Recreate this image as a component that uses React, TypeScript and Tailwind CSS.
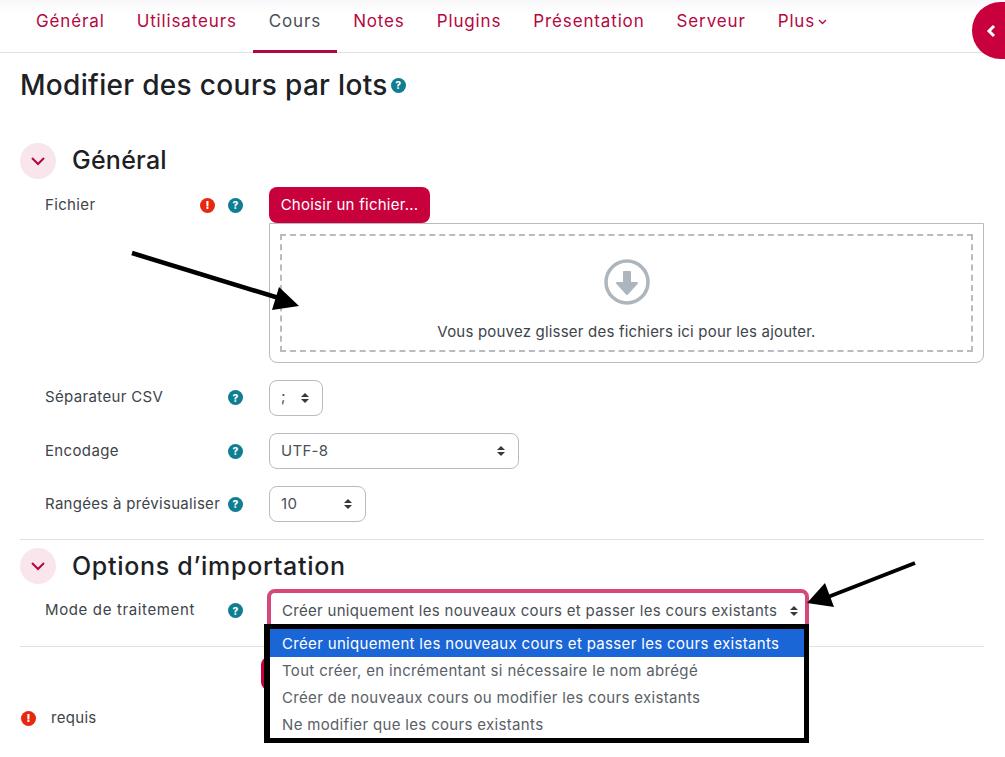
const FONT = "font-['Inter',sans-serif]";

function Help({ className = '' }: { className?: string }) {
  return (
    <span className={`w-[15px] h-[15px] rounded-full bg-[#0f7e92] text-white text-[10px] font-extrabold leading-none flex items-center justify-center shrink-0 ${className}`}>
      ?
    </span>
  );
}

function Required() {
  return (
    <span className="w-[15px] h-[15px] rounded-full bg-[#e6290f] text-white text-[11px] font-extrabold leading-none flex items-center justify-center shrink-0">
      !
    </span>
  );
}

function Sort() {
  return (
    <svg width="10" height="12" viewBox="0 0 10 12" className="shrink-0">
      <path d="M5 1 L9 5 H1 Z M5 11 L1 7 H9 Z" fill="#343a40" />
    </svg>
  );
}

function Chevron() {
  return (
    <div className="w-9 h-9 rounded-full bg-[#f8e6ec] flex items-center justify-center">
      <svg width="16" height="10" viewBox="0 0 16 10">
        <path d="M2 2 L8 8 L14 2" fill="none" stroke="#b5073f" strokeWidth="2" />
      </svg>
    </div>
  );
}

function SectionHead({ title, tracking }: { title: string; tracking: string }) {
  return (
    <div className="flex items-center gap-4 h-9">
      <Chevron />
      <h3 className={`text-[25px] font-medium text-[#1d2125] ${tracking}`}>{title}</h3>
    </div>
  );
}

function Row({ label, children, required, h, tracking = 'tracking-[0.35px]' }: { label: string; children: React.ReactNode; required?: boolean; h: string; tracking?: string }) {
  return (
    <div className={`flex items-center pl-[25px] ${h}`}>
      <div className="w-[224px] flex items-center shrink-0">
        <span className={`w-[155px] whitespace-nowrap text-[15px] text-[#3e4449] ${tracking}`}>{label}</span>
        <span className="w-[15px] mr-[13px]">{required && <Required />}</span>
        <Help />
      </div>
      {children}
    </div>
  );
}

function Select({ value, w }: { value: string; w: string }) {
  return (
    <div className={`${w} h-[36px] pl-[11px] pr-3 rounded-lg border border-[#b8bcc0] flex items-center justify-between text-[15px] tracking-[0.3px] text-[#4a5056]`}>
      <span>{value}</span>
      <Sort />
    </div>
  );
}

const tabs = ['Général', 'Utilisateurs', 'Cours', 'Notes', 'Plugins', 'Présentation', 'Serveur'];
const options = [
  'Tout créer, en incrémentant si nécessaire le nom abrégé',
  'Créer de nouveaux cours ou modifier les cours existants',
  'Ne modifier que les cours existants',
];

export default function App() {
  return (
    <div className={`relative w-[1005px] h-[757px] overflow-hidden bg-white ${FONT}`}>
      <nav className="h-[53px] pl-5 flex border-b border-[#dee2e6] bg-gradient-to-b from-[#f8f8fb] to-white to-[25%]">
        {tabs.map((t) => (
          <div
            key={t}
            className={`px-4 pt-[9px] text-[17px] tracking-[0.86px] ${t === 'Cours' ? 'text-[#4a5056] border-b-[3px] border-[#b5073f] h-[53px]' : 'text-[#b5073f]'}`}
          >
            {t}
          </div>
        ))}
        <div className="px-4 pt-[9px] text-[17px] tracking-[0.86px] text-[#b5073f] flex items-start">
          Plus
          <svg width="9" height="6" viewBox="0 0 9 6" className="ml-[3px] mt-[10px]">
            <path d="M1 1 L4.5 4.5 L8 1" fill="none" stroke="#b5073f" strokeWidth="1.3" />
          </svg>
        </div>
      </nav>

      <main className="px-5">
        <div className="h-[64px] flex items-center">
          <h2 className="text-[28px] font-medium tracking-[0.32px] text-[#1d2125]">Modifier des cours par lots</h2>
          <Help className="ml-[3px]" />
        </div>

        <div className="mt-[26px]">
          <SectionHead title="Général" tracking="tracking-[0.25px]" />
          <div className="mt-2">
            <Row label="Fichier" required h="h-[36px]">
              <button className="h-[36px] w-[161px] rounded-lg bg-[#c8003c] text-white text-[15px] tracking-[0.25px]">
                Choisir un fichier...
              </button>
            </Row>
            <div className="ml-[249px] mr-[1px] h-[140px] border border-[#b8bcc0] rounded-b-lg p-[10px]">
              <div className="h-full border-2 border-dashed border-[#b8bcc0] flex flex-col items-center pt-[22px]">
                <svg width="48" height="48" viewBox="0 0 48 48">
                  <circle cx="24" cy="24" r="21" fill="none" stroke="#adb5bd" strokeWidth="3.5" />
                  <path d="M21 14 H27 V25 H34 L24 36 L14 25 H21 Z" fill="#adb5bd" stroke="#adb5bd" strokeWidth="2" strokeLinejoin="round" />
                </svg>
                <p className="mt-[15px] text-[15px] tracking-[0.2px] text-[#3e4449]">Vous pouvez glisser des fichiers ici pour les ajouter.</p>
              </div>
            </div>
            <div className="mt-4">
              <Row label="Séparateur CSV" h="h-[37px]">
                <Select value=";" w="w-[54px]" />
              </Row>
            </div>
            <div className="mt-[17px]">
              <Row label="Encodage" h="h-[36px]">
                <Select value="UTF-8" w="w-[250px]" />
              </Row>
            </div>
            <div className="mt-[17px]">
              <Row label="Rangées à prévisualiser" h="h-[36px]" tracking="tracking-[0.3px]">
                <Select value="10" w="w-[97px]" />
              </Row>
            </div>
          </div>
        </div>

        <hr className="mt-[17px] border-[#dee2e6] mr-[1px]" />

        <div className="mt-2">
          <SectionHead title="Options d’importation" tracking="tracking-[0.7px] pt-[1px]" />
          <div className="mt-[5px]">
            <Row label="Mode de traitement" h="h-[43px]" tracking="tracking-[0.63px]">
              <div className="-ml-[2px] w-[542px] h-[43px] pl-[11px] pr-[6px] pt-[1px] rounded-lg border-4 border-[#d6487c] flex items-center justify-between text-[15px] tracking-[0.3px] text-[#4a5056] whitespace-nowrap">
                <span>Créer uniquement les nouveaux cours et passer les cours existants</span>
                <Sort />
              </div>
            </Row>
          </div>
        </div>

        <hr className="mt-[14px] border-[#dee2e6] mr-[1px]" />

        <div className="ml-[241px] mt-[10px] h-[33px] w-[100px] rounded-lg bg-[#c8003c]" />

        <div className="mt-[17px] flex items-center gap-[15px] text-[15px] tracking-[0.3px] text-[#3e4449] pl-[1px]">
          <Required />
          <span>requis</span>
        </div>
      </main>

      {/* volet de droite */}
      <div className="absolute left-[972px] top-[2px] w-[60px] h-[57px] rounded-full bg-[#c8003c] flex items-center pl-[14px]">
        <svg width="10" height="14" viewBox="0 0 10 14">
          <path d="M8 2 L3 7 L8 12" fill="none" stroke="white" strokeWidth="3" />
        </svg>
      </div>

      {/* liste ouverte du select */}
      <div className="absolute left-[264px] top-[624px] w-[545px] h-[119px] bg-white border-[5px] border-black border-l-[6px] text-[15px] tracking-[0.33px] text-[#5a6066] whitespace-nowrap">
        <div className="h-[28px] pl-[12px] pt-[2px] flex items-center bg-[#1a66d6] text-white">
          Créer uniquement les nouveaux cours et passer les cours existants
        </div>
        {options.map((o) => (
          <div key={o} className="h-[27px] pl-[12px] pt-[2px] flex items-center">{o}</div>
        ))}
      </div>

      {/* fleches ajoutees sur la capture */}
      <svg className="absolute left-0 top-0 pointer-events-none" width="1005" height="757">
        <path d="M132 253 L282 299" stroke="black" strokeWidth="4.5" />
        <path d="M299 306 L279 287 L272 310 Z" fill="black" />
        <path d="M915 563 L828 597" stroke="black" strokeWidth="4" />
        <path d="M807 603 L825 583 L834 607 Z" fill="black" />
      </svg>
    </div>
  );
}
